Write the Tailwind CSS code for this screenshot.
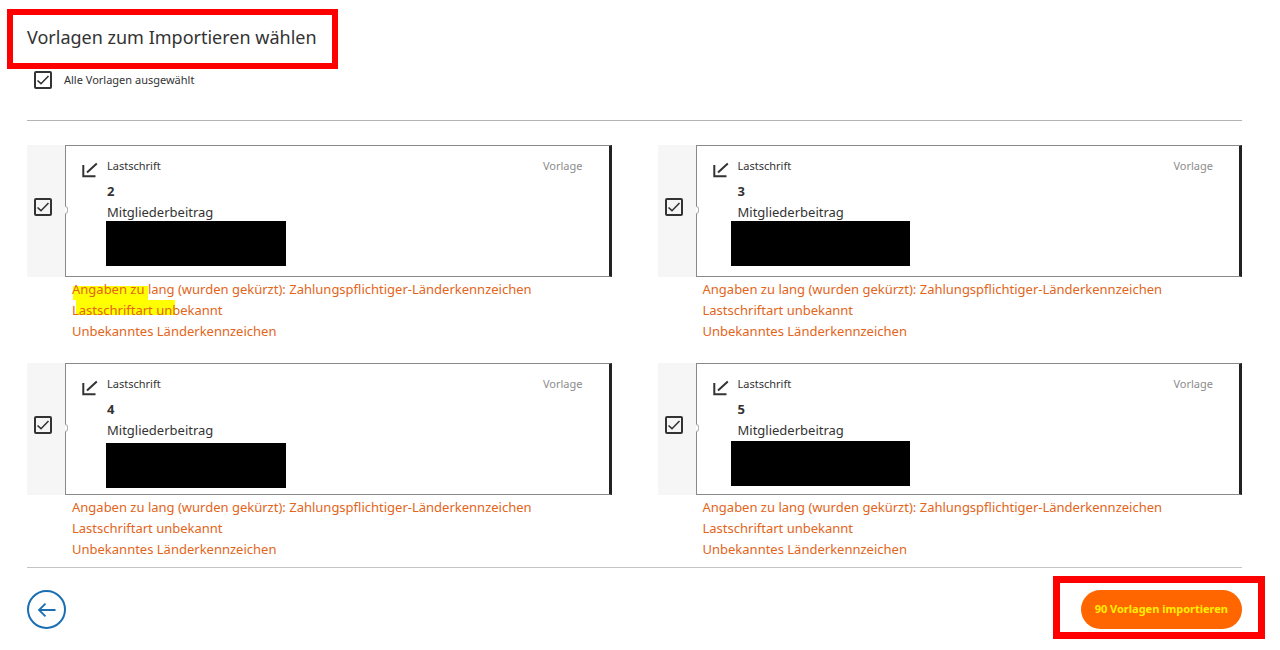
<!DOCTYPE html>
<html lang="de">
<head>
    <meta charset="UTF-8">
    <meta name="viewport" content="width=device-width, initial-scale=1">
    <title>Vorlagen zum Importieren wählen</title>
    <script src="https://cdn.jsdelivr.net/npm/@tailwindcss/browser@4"></script>
</head>
<body class="bg-white font-['Noto_Sans','Open_Sans',sans-serif] text-[#333333]">
<main class="pl-[27px] pr-[38px] pt-6 pb-5">
    <!-- Title -->
    <h1 class="relative w-fit text-lg leading-[26px]">
        Vorlagen zum Importieren wählen
        <span class="absolute -left-5 -right-[21px] -top-[15px] -bottom-[19px] border-6 border-[#ff0000]"></span>
    </h1>

    <!-- Select all -->
    <div class="flex items-center gap-3 mt-[21px] pl-[7px] pb-[31px] border-b border-[#b4b4b4]">
        <span class="grid">
            <input type="checkbox" id="selectAll" checked class="peer col-start-1 row-start-1 size-[18px] appearance-none rounded-xs border-2 border-[#333333]">
            <svg class="col-start-1 row-start-1 size-[18px] pointer-events-none invisible peer-checked:visible" viewBox="0 0 18 18" fill="none" stroke="#333333" stroke-width="1.6"><path d="M3.5 9.5l3.5 3.2L14.5 5"/></svg>
        </span>
        <label for="selectAll" class="text-[11px] leading-[18px]">Alle Vorlagen ausgewählt</label>
    </div>

    <!-- Templates -->
    <div class="grid grid-cols-2 gap-x-[46px] gap-y-[21px] pt-6 pb-[7px] border-b border-[#c4c4c4]">
        <section>
            <div class="flex h-[132px] bg-[#f6f6f6]">
                <div class="w-[38px] flex items-center pl-[7px] shrink-0">
                    <span class="grid mb-2">
                        <input type="checkbox" aria-label="Vorlage 2" checked class="peer col-start-1 row-start-1 size-[18px] appearance-none rounded-xs border-2 border-[#333333]">
                        <svg class="col-start-1 row-start-1 size-[18px] pointer-events-none invisible peer-checked:visible" viewBox="0 0 18 18" fill="none" stroke="#333333" stroke-width="1.6"><path d="M3.5 9.5l3.5 3.2L14.5 5"/></svg>
                    </span>
                </div>
                <div class="relative flex-1 flex bg-white border border-[#8a8a8a] border-r-3 border-r-[#222222] pl-4 pr-[26px] pt-[11px]">
                    <span class="absolute -left-px top-[60px] w-[3px] h-2 rounded-r-full bg-white border border-l-0 border-[#b0b0b0]"></span>
                    <svg class="size-4 mt-[5px] mr-[9px]" viewBox="0 0 16 16" fill="none" stroke="#333333" stroke-width="2"><path d="M1.3 3v11.2H13.5M5 10.5L14.8 1.5"/></svg>
                    <div class="flex-1">
                        <div class="flex justify-between text-[11px] leading-[18px]"><span>Lastschrift</span><span class="text-[#8c8c8c]">Vorlage</span></div>
                        <h2 class="mt-1.5 text-[13px] leading-[21px] font-bold">2</h2>
                        <p class="text-[13px] leading-[21px]">Mitgliederbeitrag</p>
                    </div>
                    <span class="absolute left-10 top-[75px] w-[180px] h-[45px] bg-black"></span>
                </div>
            </div>
            <div class="pl-[45px] pt-0.5 text-[13px] leading-[21px] text-[#e2651a]">
                <p class="relative"><span class="absolute left-px top-[7px] w-[75px] h-[14px] bg-[#ffff00]"></span><span class="relative">Angaben zu lang (wurden gekürzt): Zahlungspflichtiger-Länderkennzeichen</span></p>
                <p class="relative"><span class="absolute left-1 top-0 w-[99px] h-[15px] bg-[#ffff00]"></span><span class="relative">Lastschriftart unbekannt</span></p>
                <p>Unbekanntes Länderkennzeichen</p>
            </div>
        </section>

        <section>
            <div class="flex h-[132px] bg-[#f6f6f6]">
                <div class="w-[38px] flex items-center pl-[7px] shrink-0">
                    <span class="grid mb-2">
                        <input type="checkbox" aria-label="Vorlage 3" checked class="peer col-start-1 row-start-1 size-[18px] appearance-none rounded-xs border-2 border-[#333333]">
                        <svg class="col-start-1 row-start-1 size-[18px] pointer-events-none invisible peer-checked:visible" viewBox="0 0 18 18" fill="none" stroke="#333333" stroke-width="1.6"><path d="M3.5 9.5l3.5 3.2L14.5 5"/></svg>
                    </span>
                </div>
                <div class="relative flex-1 flex bg-white border border-[#8a8a8a] border-r-3 border-r-[#222222] pl-4 pr-[26px] pt-[11px]">
                    <span class="absolute -left-px top-[60px] w-[3px] h-2 rounded-r-full bg-white border border-l-0 border-[#b0b0b0]"></span>
                    <svg class="size-4 mt-[5px] mr-[9px]" viewBox="0 0 16 16" fill="none" stroke="#333333" stroke-width="2"><path d="M1.3 3v11.2H13.5M5 10.5L14.8 1.5"/></svg>
                    <div class="flex-1">
                        <div class="flex justify-between text-[11px] leading-[18px]"><span>Lastschrift</span><span class="text-[#8c8c8c]">Vorlage</span></div>
                        <h2 class="mt-1.5 text-[13px] leading-[21px] font-bold">3</h2>
                        <p class="text-[13px] leading-[21px]">Mitgliederbeitrag</p>
                    </div>
                    <span class="absolute left-[34px] top-[75px] w-[179px] h-[45px] bg-black"></span>
                </div>
            </div>
            <div class="pl-[45px] pt-0.5 text-[13px] leading-[21px] text-[#e2651a]">
                <p>Angaben zu lang (wurden gekürzt): Zahlungspflichtiger-Länderkennzeichen</p>
                <p>Lastschriftart unbekannt</p>
                <p>Unbekanntes Länderkennzeichen</p>
            </div>
        </section>

        <section>
            <div class="flex h-[132px] bg-[#f6f6f6]">
                <div class="w-[38px] flex items-center pl-[7px] shrink-0">
                    <span class="grid mb-2">
                        <input type="checkbox" aria-label="Vorlage 4" checked class="peer col-start-1 row-start-1 size-[18px] appearance-none rounded-xs border-2 border-[#333333]">
                        <svg class="col-start-1 row-start-1 size-[18px] pointer-events-none invisible peer-checked:visible" viewBox="0 0 18 18" fill="none" stroke="#333333" stroke-width="1.6"><path d="M3.5 9.5l3.5 3.2L14.5 5"/></svg>
                    </span>
                </div>
                <div class="relative flex-1 flex bg-white border border-[#8a8a8a] border-r-3 border-r-[#222222] pl-4 pr-[26px] pt-[11px]">
                    <span class="absolute -left-px top-[60px] w-[3px] h-2 rounded-r-full bg-white border border-l-0 border-[#b0b0b0]"></span>
                    <svg class="size-4 mt-[5px] mr-[9px]" viewBox="0 0 16 16" fill="none" stroke="#333333" stroke-width="2"><path d="M1.3 3v11.2H13.5M5 10.5L14.8 1.5"/></svg>
                    <div class="flex-1">
                        <div class="flex justify-between text-[11px] leading-[18px]"><span>Lastschrift</span><span class="text-[#8c8c8c]">Vorlage</span></div>
                        <h2 class="mt-1.5 text-[13px] leading-[21px] font-bold">4</h2>
                        <p class="text-[13px] leading-[21px]">Mitgliederbeitrag</p>
                    </div>
                    <span class="absolute left-10 top-[79px] w-[180px] h-[45px] bg-black"></span>
                </div>
            </div>
            <div class="pl-[45px] pt-0.5 text-[13px] leading-[21px] text-[#e2651a]">
                <p>Angaben zu lang (wurden gekürzt): Zahlungspflichtiger-Länderkennzeichen</p>
                <p>Lastschriftart unbekannt</p>
                <p>Unbekanntes Länderkennzeichen</p>
            </div>
        </section>

        <section>
            <div class="flex h-[132px] bg-[#f6f6f6]">
                <div class="w-[38px] flex items-center pl-[7px] shrink-0">
                    <span class="grid mb-2">
                        <input type="checkbox" aria-label="Vorlage 5" checked class="peer col-start-1 row-start-1 size-[18px] appearance-none rounded-xs border-2 border-[#333333]">
                        <svg class="col-start-1 row-start-1 size-[18px] pointer-events-none invisible peer-checked:visible" viewBox="0 0 18 18" fill="none" stroke="#333333" stroke-width="1.6"><path d="M3.5 9.5l3.5 3.2L14.5 5"/></svg>
                    </span>
                </div>
                <div class="relative flex-1 flex bg-white border border-[#8a8a8a] border-r-3 border-r-[#222222] pl-4 pr-[26px] pt-[11px]">
                    <span class="absolute -left-px top-[60px] w-[3px] h-2 rounded-r-full bg-white border border-l-0 border-[#b0b0b0]"></span>
                    <svg class="size-4 mt-[5px] mr-[9px]" viewBox="0 0 16 16" fill="none" stroke="#333333" stroke-width="2"><path d="M1.3 3v11.2H13.5M5 10.5L14.8 1.5"/></svg>
                    <div class="flex-1">
                        <div class="flex justify-between text-[11px] leading-[18px]"><span>Lastschrift</span><span class="text-[#8c8c8c]">Vorlage</span></div>
                        <h2 class="mt-1.5 text-[13px] leading-[21px] font-bold">5</h2>
                        <p class="text-[13px] leading-[21px]">Mitgliederbeitrag</p>
                    </div>
                    <span class="absolute left-[34px] top-[77px] w-[179px] h-[45px] bg-black"></span>
                </div>
            </div>
            <div class="pl-[45px] pt-0.5 text-[13px] leading-[21px] text-[#e2651a]">
                <p>Angaben zu lang (wurden gekürzt): Zahlungspflichtiger-Länderkennzeichen</p>
                <p>Lastschriftart unbekannt</p>
                <p>Unbekanntes Länderkennzeichen</p>
            </div>
        </section>
    </div>

    <!-- Actions -->
    <div class="flex items-center justify-between pt-[22px]">
        <button type="button" aria-label="Zurück" class="size-[39px] rounded-full border-2 border-[#1a6fb4] flex items-center justify-center">
            <svg class="size-5 shrink-0" viewBox="0 0 20 20" fill="none" stroke="#1a6fb4" stroke-width="1.8"><path d="M18.5 10H2M8.5 3.6L2 10l6.5 6.4"/></svg>
        </button>
        <div class="relative">
            <button type="button" class="block h-[39px] px-[14px] rounded-full bg-[#ff6600] text-[11px] font-bold text-[#ffee00]">90 Vorlagen importieren</button>
            <span class="absolute -left-7 -right-[23px] -top-[14px] -bottom-[10px] border-7 border-[#ff0000] pointer-events-none"></span>
        </div>
    </div>
</main>
</body>
</html>
